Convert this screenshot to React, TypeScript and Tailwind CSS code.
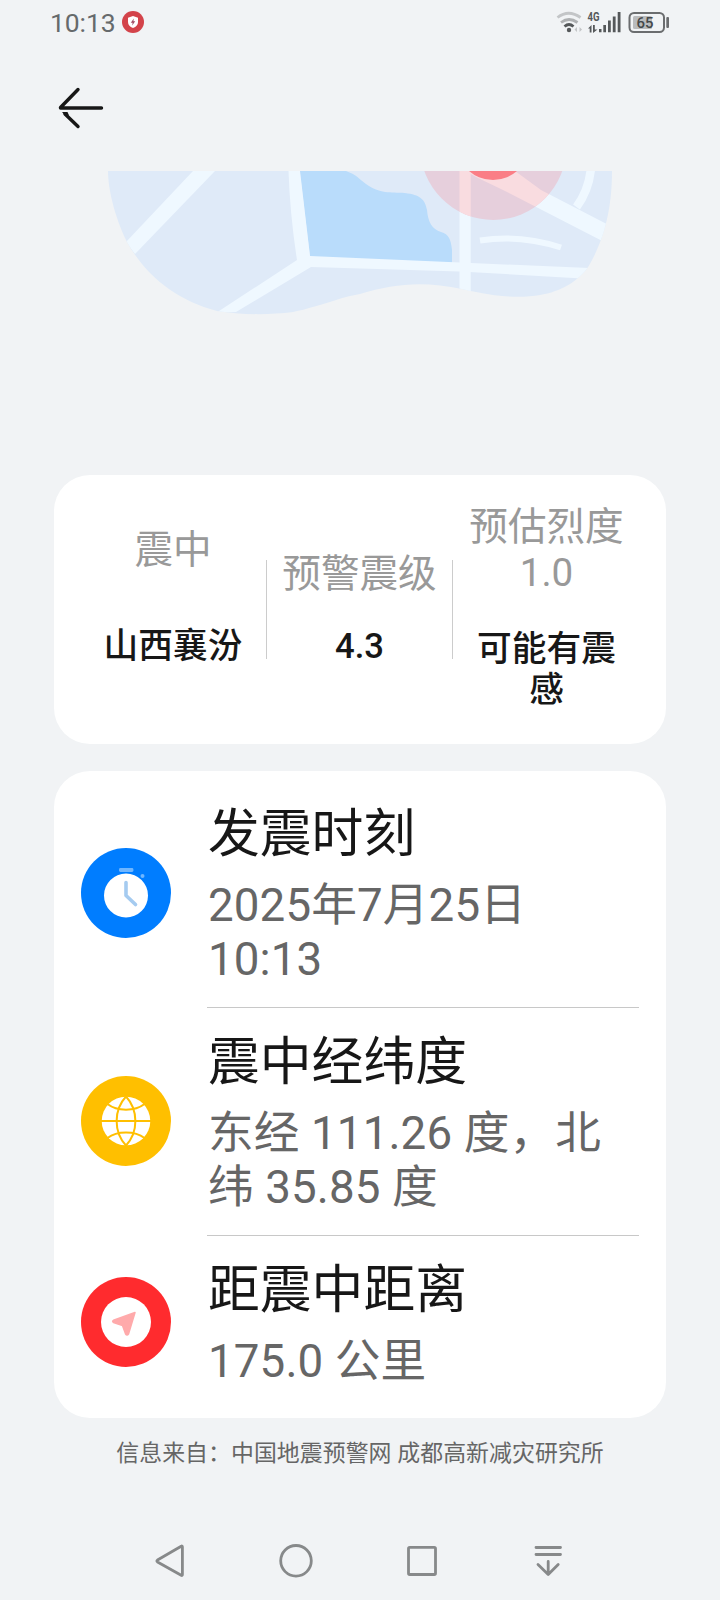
import React from "react";

const Clock = () => (
  <svg viewBox="0 0 90 90" className="mb-[2px] h-[90px] w-[90px] shrink-0">
    <circle cx="45" cy="45" r="45" fill="#007dff" />
    <rect x="38" y="20" width="14.4" height="4" rx="1.4" fill="#6fb6ff" />
    <circle cx="61.5" cy="28" r="2" fill="#6fb6ff" />
    <circle cx="45" cy="47.5" r="22" fill="#fff" />
    <path d="M45 34.5V47.5L54.5 56.5" fill="none" stroke="#a5cbf0" strokeWidth="3.6" strokeLinecap="round" strokeLinejoin="round" />
  </svg>
);

const Globe = () => (
  <svg viewBox="0 0 90 90" className="mb-[2px] h-[90px] w-[90px] shrink-0">
    <circle cx="45" cy="45" r="45" fill="#ffbf00" />
    <circle cx="45" cy="45" r="24.3" fill="#fff" />
    <g fill="none" stroke="#ffbf00" strokeWidth="2">
      <path d="M20 45H70M45 20.5C32.5 34 32.5 56 45 69.500C57.500 56 57.500 34 45 20.500" />
      <path d="M26.500 28C36 35.500 54 35.500 63.500 28M26.500 62C36 54.500 54 54.500 63.500 62" />
    </g>
  </svg>
);

const Compass = () => (
  <svg viewBox="0 0 90 90" className="mb-[2px] h-[90px] w-[90px] shrink-0">
    <circle cx="45" cy="45" r="45" fill="#ff2b2e" />
    <circle cx="45" cy="45" r="25" fill="#fff" />
    <path d="M32.500 43.300L54 35.500L47.500 57Q46 59 44.600 57L41.500 48.500L32.500 45.500Q30.800 44.300 32.500 43.300Z" fill="#ffaaab" stroke="#ffaaab" strokeWidth="1.500" strokeLinejoin="round" />
  </svg>
);

const Roads = ({ color }: { color: string }) => (
  <g fill={color}>
    <path d="M193 171H215L135 254L126 242Z" />
    <path d="M288.500 171H300L310 256L460 262.500L600 268.500V279.500L460 271.500L311 267L236 312L216 313L297 260Q290 215 288.500 171Z" />
    <path d="M459.500 171H470.700V300H459.500Z" />
    <path d="M460 168L500 160L541 190L620 231L612 246L503 190L478 178Z" />
    <g fill="none" stroke={color}>
      <path d="M591 168Q589 190 576.500 207" strokeWidth="8.500" />
      <path d="M480 240.500Q520 234 561 247.500" strokeWidth="6" />
    </g>
  </g>
);

const MapArt = () => (
  <svg viewBox="0 171 720 150" className="block h-[150px] w-[720px]">
    <defs>
      <clipPath id="land">
        <path d="M108 171C108 188 114 215 127 242C146 276 176 300 217 311C240 315 270 315 293 312C322 306 340 297 360 294C395 283 425 281 462 289C500 298 522 298 540 295C560 292 582 280 591 262C603 240 612 212 612 171Z" />
      </clipPath>
      <clipPath id="zone">
        <circle cx="493.300" cy="147" r="73" />
      </clipPath>
    </defs>
    <g clipPath="url(#land)">
      <rect x="100" y="171" width="520" height="150" fill="#dfeaf8" />
      <path d="M299 165L310 257L452 263L452 250C451 240 449 234 441 232C432 229 428 222 427 210C425 199 420 195 405 193C390 192 380 194 366 184C358 178 356 174 343 170Z" fill="#b9dcfb" />
      <Roads color="#eff8ff" />
    </g>
    <g clipPath="url(#zone)">
      <rect x="415" y="171" width="160" height="60" fill="#e6cfdc" />
      <Roads color="#f9dce0" />
    </g>
    <circle cx="493" cy="143.500" r="36.500" fill="#fa7e86" />
  </svg>
);

const StatusIcons = () => (
  <svg viewBox="550 0 130 44" className="h-[44px] w-[130px]">
    <g fill="none" strokeWidth="2.800">
      <path d="M557.500 17.500Q568.500 9 580.500 17.500" stroke="#c3c5c7" />
      <path d="M561 22.500Q569 16.500 577.500 22.500" stroke="#aeb0b2" />
      <path d="M564.500 26.500Q569 22.500 573.500 26.500" stroke="#55585a" />
    </g>
    <circle cx="569" cy="30" r="2.200" fill="#55585a" />
    <path d="M574.500 29.500L577 27V32ZM582 29.500L579.500 27V32Z" fill="#c3c5c7" />
    <text x="587.500" y="21" className="font-['Roboto'] text-[12px] font-bold" textLength="12" lengthAdjust="spacingAndGlyphs" fill="#55585a">4G</text>
    <path d="M588 28.500L591.500 25V32.500H589.700V28.500ZM593 25H594.800V29.500H597.500L593 33Z" fill="#55585a" />
    <path d="M599 29H601.500V32.300H599ZM603.300 25H606V32.300H603.300ZM608 20.500H610.800V32.300H608ZM612.800 16.500H615.600V32.300H612.800ZM617.700 12H620.500V32.300H617.700Z" fill="#55585a" />
    <rect x="629.500" y="13" width="34.500" height="19" rx="4.500" fill="none" stroke="#6b6d6f" strokeWidth="2" />
    <rect x="633" y="16" width="19" height="13" rx="1.500" fill="#b9bbbd" />
    <rect x="666.300" y="17" width="2.700" height="11" rx="1" fill="#6b6d6f" />
    <text x="636.500" y="27.500" className="font-['Roboto'] text-[15.500px] font-medium" textLength="17" lengthAdjust="spacingAndGlyphs" fill="#45484a">65</text>
  </svg>
);

type RowProps = { icon: React.ReactNode; title: string; lines: string[]; last?: boolean };

const Row = ({ icon, title, lines, last }: RowProps) => (
  <div className="flex items-center">
    {icon}
    <div className={last ? "ml-9 w-[432px] pb-[20px]" : "ml-9 w-[432px] border-b border-[#c8c8c8] pb-[20px]"}>
      <h2 className="pt-[22px] pl-px text-[51.800px] leading-[66px] text-[#171717]">{title}</h2>
      <div className="pt-[11px] pl-px text-[45.700px] leading-[54px] tracking-[0.12px] text-[#666]">
        {lines.map((l) => (
          <p key={l} className="whitespace-nowrap">{l}</p>
        ))}
      </div>
    </div>
  </div>
);

export default function App() {
  return (
    <main className="flex h-[1600px] w-[720px] flex-col overflow-hidden bg-[#f1f3f5] font-['Roboto','Noto_Sans_CJK_SC',sans-serif]">
      <header className="flex h-[44px] shrink-0 items-center justify-between pr-[40px] pl-[50px]">
        <div className="flex items-center gap-[6px]">
          <span className="pt-px text-[26.500px] leading-[44px] tracking-[-0.100px] text-[#666a6c]">10:13</span>
          <svg viewBox="0 0 22 22" className="h-[22px] w-[22px]">
            <circle cx="11" cy="11" r="11" fill="#d3434a" />
            <path d="M11 5L16 6.800V11Q16 15 11 17Q6 15 6 11V6.800Z" fill="#fff" />
            <path d="M11.800 7.500L8.800 11.700H10.600L10.200 14.500L13.200 10.300H11.400Z" fill="#a04a62" />
          </svg>
        </div>
        <StatusIcons />
      </header>
      <nav className="h-[127px] shrink-0 pt-[41px] pl-[56px]">
        <svg viewBox="0 0 50 46" className="h-[46px] w-[50px]" fill="none" stroke="#171717" strokeWidth="3.400" strokeLinecap="round">
          <path d="M22 4.500L4.500 22.500M4.500 23H45.500" />
          <path d="M9 29L22 41.500" />
          <path d="M6 27H11.500L13 30.500H9Z" fill="#171717" stroke="none" />
        </svg>
      </nav>
      <MapArt />
      <section className="mx-[54px] mt-[154px] flex h-[269px] shrink-0 rounded-[36px] bg-white text-center">
        <div className="w-[212px] pl-[26px]">
          <p className="pt-[50px] text-[38.600px] leading-[50px] text-[#999]">震中</p>
          <p className="pt-[46px] text-[34.700px] leading-[50px] font-medium text-[#171717]">山西襄汾</p>
        </div>
        <div className="mt-[85px] h-[99px] w-px bg-[#ccc]" />
        <div className="w-[185px]">
          <p className="pt-[74px] text-[38.600px] leading-[50px] whitespace-nowrap text-[#999]">预警震级</p>
          <p className="pt-[22px] text-[34.700px] leading-[50px] font-medium text-[#171717]">4.3</p>
        </div>
        <div className="mt-[85px] h-[99px] w-px bg-[#ccc]" />
        <div className="w-[187px]">
          <p className="pt-[29px] text-[38.600px] leading-[46px] text-[#999]">预估烈度<br />1.0</p>
          <p className="pt-[33px] text-[34.700px] leading-[41px] font-medium text-[#171717]">可能有震<br />感</p>
        </div>
      </section>
      <section className="mx-[54px] mt-[27px] h-[647px] shrink-0 rounded-[36px] bg-white pt-[9px] pl-[27px]">
        <Row icon={<Clock />} title="发震时刻" lines={["2025年7月25日", "10:13"]} />
        <Row icon={<Globe />} title="震中经纬度" lines={["东经 111.26 度，北", "纬 35.85 度"]} />
        <Row icon={<Compass />} title="距震中距离" lines={["175.0 公里"]} last />
      </section>
      <p className="mt-[18px] shrink-0 text-center text-[22.900px] leading-[36px] tracking-[0.050px] whitespace-nowrap text-[#666]">信息来自：中国地震预警网 成都高新减灾研究所</p>
      <footer className="mt-auto h-[78px] shrink-0">
        <svg viewBox="0 1522 720 78" className="h-[78px] w-[720px]" fill="none" stroke="#87898a" strokeWidth="2.800" strokeLinecap="round" strokeLinejoin="round">
          <path d="M181.200 1546.200Q182.400 1545.600 182.400 1547V1574.500Q182.400 1576 181.200 1575.300L157.500 1562Q156.200 1561 157.500 1560Z" />
          <circle cx="296" cy="1560.800" r="15.300" />
          <rect x="408.500" y="1547.300" width="27" height="27.200" rx="1.200" />
          <path d="M536 1547.500H560.500M536 1554.500H560.500M548.200 1561.500V1574M538 1564.500L548.200 1574.500L558.200 1564.500" />
        </svg>
      </footer>
    </main>
  );
}
